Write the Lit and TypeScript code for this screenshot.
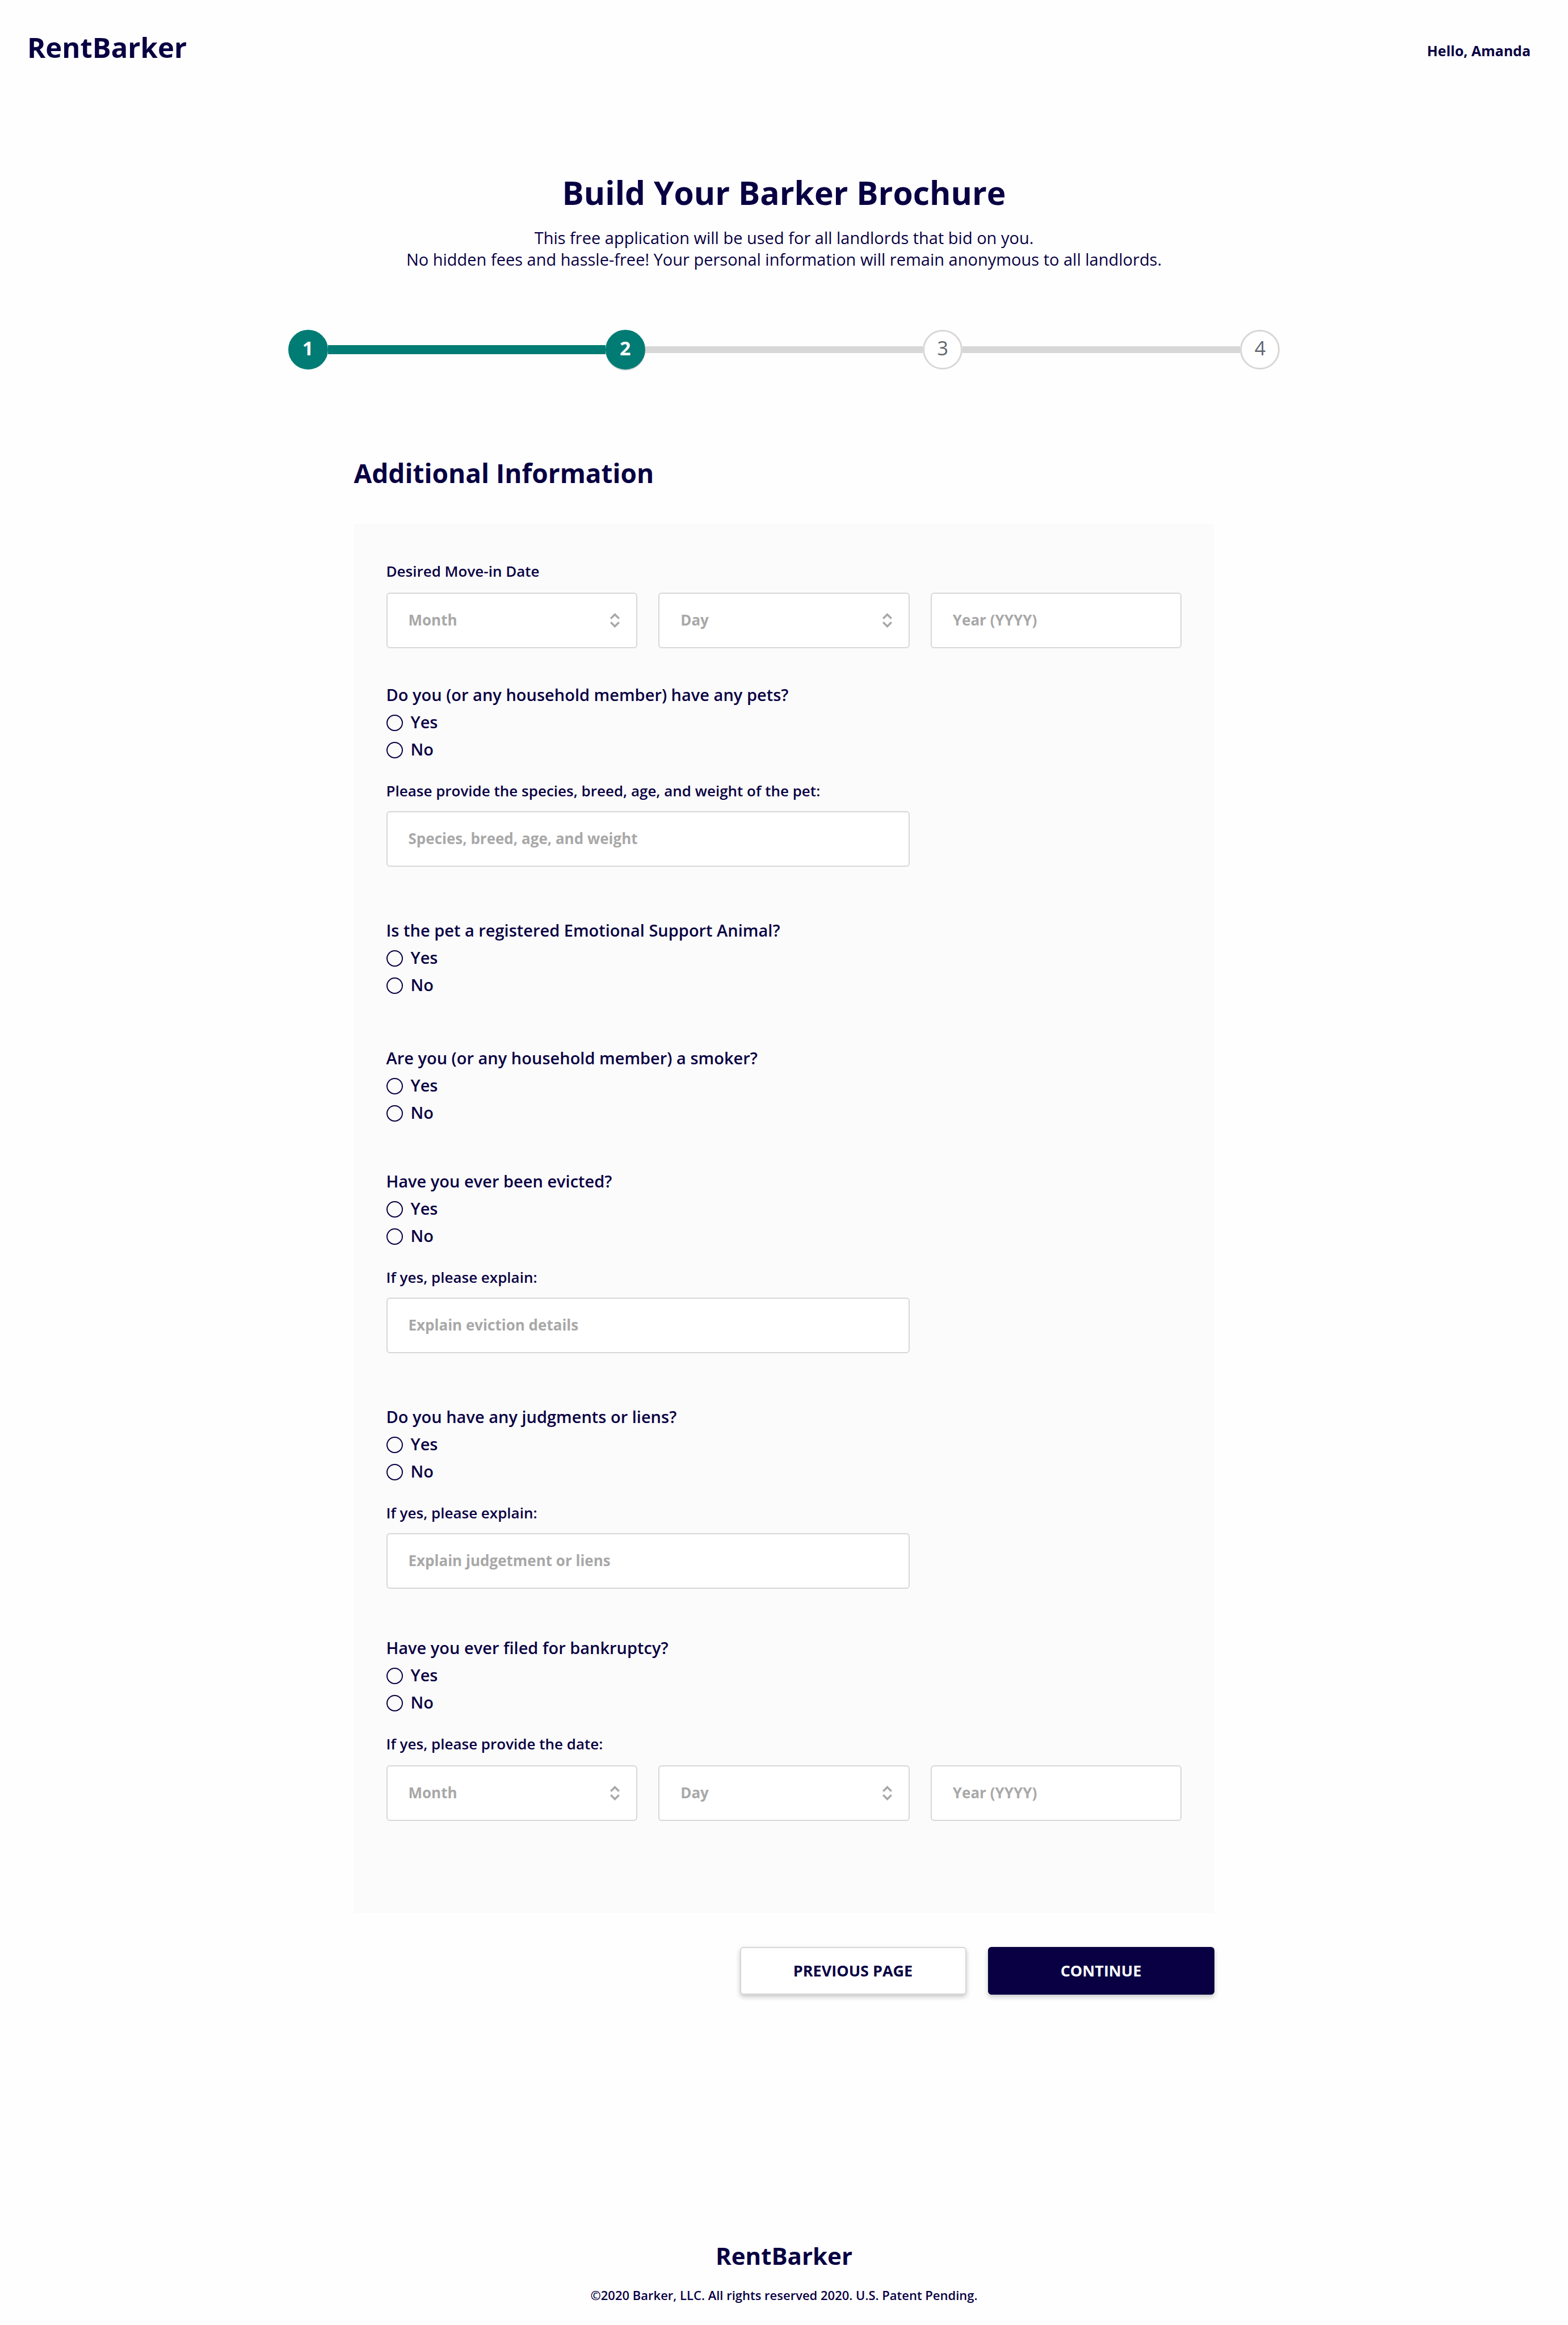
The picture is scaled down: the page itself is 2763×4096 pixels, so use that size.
import { LitElement, html, css, svg, nothing } from "lit";
import { customElement, property } from "lit/decorators.js";
import { classMap } from "lit/directives/class-map.js";

const base = css`
  *,
  *::before,
  *::after {
    box-sizing: border-box;
  }
  :host {
    --navy: #080042;
    --teal: #007c74;
    --rule: #d7d7d7;
    --muted: #a8a8a8;
    display: block;
    color: var(--navy);
    font-family: "Open Sans", "Noto Sans", sans-serif;
  }
`;

const fieldStyles = css`
  .label {
    display: block;
    font-size: 26px;
    font-weight: 600;
    line-height: 36px;
  }
  .control {
    display: block;
    width: 100%;
    height: 98px;
    margin: 0;
    padding: 0 37px 3px;
    border: 2px solid var(--rule);
    border-radius: 6px;
    background: #fff;
    color: var(--muted);
    font-family: inherit;
    font-size: 26px;
    font-weight: 700;
    appearance: none;
  }
  .control::placeholder {
    color: var(--muted);
    opacity: 1;
  }
  .columns {
    display: grid;
    grid-template-columns: repeat(3, 1fr);
    column-gap: 37px;
  }
`;

const MONTHS = [
  "January", "February", "March", "April", "May", "June",
  "July", "August", "September", "October", "November", "December",
];
const DAYS = Array.from({ length: 31 }, (_, i) => String(i + 1));

@customElement("progress-steps")
class ProgressSteps extends LitElement {
  @property({ type: Number }) current = 1;
  @property({ type: Number }) total = 4;

  static styles = [
    base,
    css`
      .steps {
        display: flex;
        align-items: center;
        margin: 0;
        padding: 0;
        list-style: none;
      }
      .step {
        display: flex;
        align-items: center;
        flex: 1;
      }
      .step:first-child {
        flex: none;
      }
      .dot {
        display: flex;
        flex: none;
        align-items: center;
        justify-content: center;
        width: 70px;
        height: 70px;
        padding-bottom: 6px;
        border: 3px solid var(--rule);
        border-radius: 50%;
        background: #fff;
        color: #5d666f;
        font-size: 34px;
        line-height: 40px;
      }
      .line {
        flex: 1;
        height: 12px;
        background: var(--rule);
      }
      .done .dot {
        border-color: var(--teal);
        background: var(--teal);
        color: #fff;
        font-weight: 700;
      }
      .done .line {
        height: 16px;
        background: var(--teal);
      }
      .current .dot {
        box-shadow: 0 2px 0 var(--rule);
      }
    `,
  ];

  render() {
    const steps = Array.from({ length: this.total }, (_, i) => i + 1);
    return html`<ol class="steps">
      ${steps.map(
        (n) => html`<li
          class=${classMap({
            step: true,
            done: n <= this.current,
            current: n === this.current,
          })}
          aria-current=${n === this.current ? "step" : nothing}
        >
          ${n > 1 ? html`<span class="line"></span>` : nothing}
          <span class="dot">${n}</span>
        </li>`
      )}
    </ol>`;
  }
}

@customElement("date-fields")
class DateFields extends LitElement {
  @property() label = "";

  static styles = [
    base,
    fieldStyles,
    css`
      .label {
        margin-bottom: 20px;
      }
      .picker {
        display: grid;
        align-items: center;
      }
      .picker > * {
        grid-area: 1 / 1;
      }
      .arrows {
        justify-self: end;
        width: 17px;
        height: 26px;
        margin-right: 31px;
        fill: none;
        stroke: var(--muted);
        stroke-width: 3.6;
        pointer-events: none;
      }
    `,
  ];

  private picker(id: string, name: string, options: string[]) {
    return html`<div class="picker">
      <select class="control" id=${id} aria-label=${name}>
        <option value="">${name}</option>
        ${options.map((o) => html`<option>${o}</option>`)}
      </select>
      <svg class="arrows" viewBox="0 0 17 26" aria-hidden="true">
        ${svg`<path d="M1.2 9.8 8.5 2.5l7.3 7.3M1.2 16.2l7.3 7.3 7.3-7.3" />`}
      </svg>
    </div>`;
  }

  render() {
    return html`
      <label class="label" for="month">${this.label}</label>
      <div class="columns">
        ${this.picker("month", "Month", MONTHS)}
        ${this.picker("day", "Day", DAYS)}
        <input
          class="control"
          type="text"
          inputmode="numeric"
          placeholder="Year (YYYY)"
          aria-label="Year (YYYY)"
        />
      </div>
    `;
  }
}

@customElement("text-field")
class TextField extends LitElement {
  @property() label = "";
  @property() placeholder = "";

  static styles = [
    base,
    fieldStyles,
    css`
      .label {
        margin-bottom: 18px;
      }
      .control {
        grid-column: span 2;
      }
    `,
  ];

  render() {
    return html`
      <label class="label" for="text">${this.label}</label>
      <div class="columns">
        <input class="control" id="text" type="text" placeholder=${this.placeholder} />
      </div>
    `;
  }
}

@customElement("yes-no-question")
class YesNoQuestion extends LitElement {
  @property() question = "";

  static styles = [
    base,
    css`
      .question {
        min-width: 0;
        margin: 0;
        padding: 0;
        border: 0;
      }
      .text {
        margin-bottom: 5px;
        padding: 0;
        font-size: 29px;
        font-weight: 600;
        line-height: 40px;
      }
      .option {
        display: flex;
        align-items: center;
        gap: 14px;
        width: fit-content;
        height: 48px;
        font-size: 29px;
        font-weight: 600;
        line-height: 40px;
      }
      .caption {
        padding-bottom: 2px;
      }
      .radio {
        width: 29px;
        height: 29px;
        margin: 0;
        border: 2px solid var(--navy);
        border-radius: 50%;
        appearance: none;
      }
      .radio:checked {
        background: radial-gradient(var(--navy) 45%, transparent 50%);
      }
    `,
  ];

  render() {
    return html`<fieldset class="question">
      <legend class="text">${this.question}</legend>
      ${["Yes", "No"].map(
        (answer) => html`<label class="option">
          <input class="radio" type="radio" name="answer" value=${answer} />
          <span class="caption">${answer}</span>
        </label>`
      )}
    </fieldset>`;
  }
}

type Block =
  | { kind: "date"; label: string; space?: string }
  | { kind: "text"; label: string; placeholder: string; space?: string }
  | { kind: "question"; label: string; space?: string };

const FORM: Block[] = [
  { kind: "date", label: "Desired Move-in Date" },
  { kind: "question", label: "Do you (or any household member) have any pets?", space: "space-s" },
  {
    kind: "text",
    label: "Please provide the species, breed, age, and weight of the pet:",
    placeholder: "Species, breed, age, and weight",
    space: "space-follow",
  },
  { kind: "question", label: "Is the pet a registered Emotional Support Animal?", space: "space-xl" },
  { kind: "question", label: "Are you (or any household member) a smoker?", space: "space-l" },
  { kind: "question", label: "Have you ever been evicted?", space: "space-m" },
  {
    kind: "text",
    label: "If yes, please explain:",
    placeholder: "Explain eviction details",
    space: "space-follow",
  },
  { kind: "question", label: "Do you have any judgments or liens?", space: "space-xl" },
  {
    kind: "text",
    label: "If yes, please explain:",
    placeholder: "Explain judgetment or liens",
    space: "space-follow",
  },
  { kind: "question", label: "Have you ever filed for bankruptcy?", space: "space-l" },
  { kind: "date", label: "If yes, please provide the date:", space: "space-follow" },
];

@customElement("app-root")
class AppRoot extends LitElement {
  static styles = [
    base,
    css`
      :host {
        background: #fefefe;
      }
      .header {
        display: flex;
        align-items: flex-end;
        justify-content: space-between;
        padding: 53px 66px 0 48px;
      }
      .logo {
        color: inherit;
        font-size: 49px;
        font-weight: 700;
        line-height: 60px;
        text-decoration: none;
      }
      .greeting {
        font-size: 25px;
        font-weight: 700;
        line-height: 48px;
      }
      .intro {
        padding-top: 190px;
        text-align: center;
      }
      .title {
        margin: 0 0 25px;
        font-size: 57px;
        font-weight: 700;
        line-height: 72px;
      }
      .lead {
        margin: 0;
        font-size: 29px;
        line-height: 38px;
      }
      .progress {
        max-width: 1748px;
        margin: 105px auto 0;
      }
      .content {
        max-width: 1516px;
        margin: 152px auto 0;
      }
      .heading {
        margin: 0 0 60px;
        font-size: 46px;
        font-weight: 700;
        line-height: 60px;
      }
      .panel {
        padding: 65px 57px 162px;
        background: #fbfbfb;
      }
      .space-follow {
        margin-top: 30px;
      }
      .space-s {
        margin-top: 62px;
      }
      .space-m {
        margin-top: 76px;
      }
      .space-l {
        margin-top: 84px;
      }
      .space-xl {
        margin-top: 92px;
      }
      .actions {
        display: flex;
        justify-content: flex-end;
        gap: 38px;
        margin-top: 60px;
      }
      .button {
        width: 399px;
        height: 84px;
        padding: 0;
        border: 2px solid var(--navy);
        border-radius: 6px;
        background: var(--navy);
        box-shadow: 0 4px 8px rgba(0, 0, 0, 0.22);
        color: #fff;
        font-family: inherit;
        font-size: 27px;
        font-weight: 700;
        line-height: 36px;
        cursor: pointer;
      }
      .secondary {
        border-color: var(--rule);
        background: #fff;
        color: var(--navy);
      }
      .footer {
        display: flex;
        flex-direction: column;
        align-items: center;
        gap: 28px;
        padding: 434px 0 38px;
      }
      .footer .logo {
        font-size: 42px;
        line-height: 52px;
      }
      .legal {
        margin: 0;
        font-size: 22px;
        font-weight: 600;
        line-height: 30px;
      }
    `,
  ];

  private block(b: Block) {
    const space = b.space ?? nothing;
    switch (b.kind) {
      case "date":
        return html`<date-fields class=${space} .label=${b.label}></date-fields>`;
      case "text":
        return html`<text-field
          class=${space}
          .label=${b.label}
          .placeholder=${b.placeholder}
        ></text-field>`;
      case "question":
        return html`<yes-no-question class=${space} .question=${b.label}></yes-no-question>`;
    }
  }

  render() {
    return html`
      <header class="header">
        <a class="logo" href="#">RentBarker</a>
        <span class="greeting">Hello, Amanda</span>
      </header>
      <main>
        <div class="intro">
          <h1 class="title">Build Your Barker Brochure</h1>
          <p class="lead">
            This free application will be used for all landlords that bid on you.<br />
            No hidden fees and hassle-free! Your personal information will remain anonymous to all
            landlords.
          </p>
        </div>
        <progress-steps class="progress" .current=${2} .total=${4}></progress-steps>
        <form class="content" @submit=${(e: Event) => e.preventDefault()}>
          <h2 class="heading">Additional Information</h2>
          <div class="panel">${FORM.map((b) => this.block(b))}</div>
          <div class="actions">
            <button class="button secondary" type="button">PREVIOUS PAGE</button>
            <button class="button" type="submit">CONTINUE</button>
          </div>
        </form>
      </main>
      <footer class="footer">
        <a class="logo" href="#">RentBarker</a>
        <p class="legal">©2020 Barker, LLC. All rights reserved 2020. U.S. Patent Pending.</p>
      </footer>
    `;
  }
}
